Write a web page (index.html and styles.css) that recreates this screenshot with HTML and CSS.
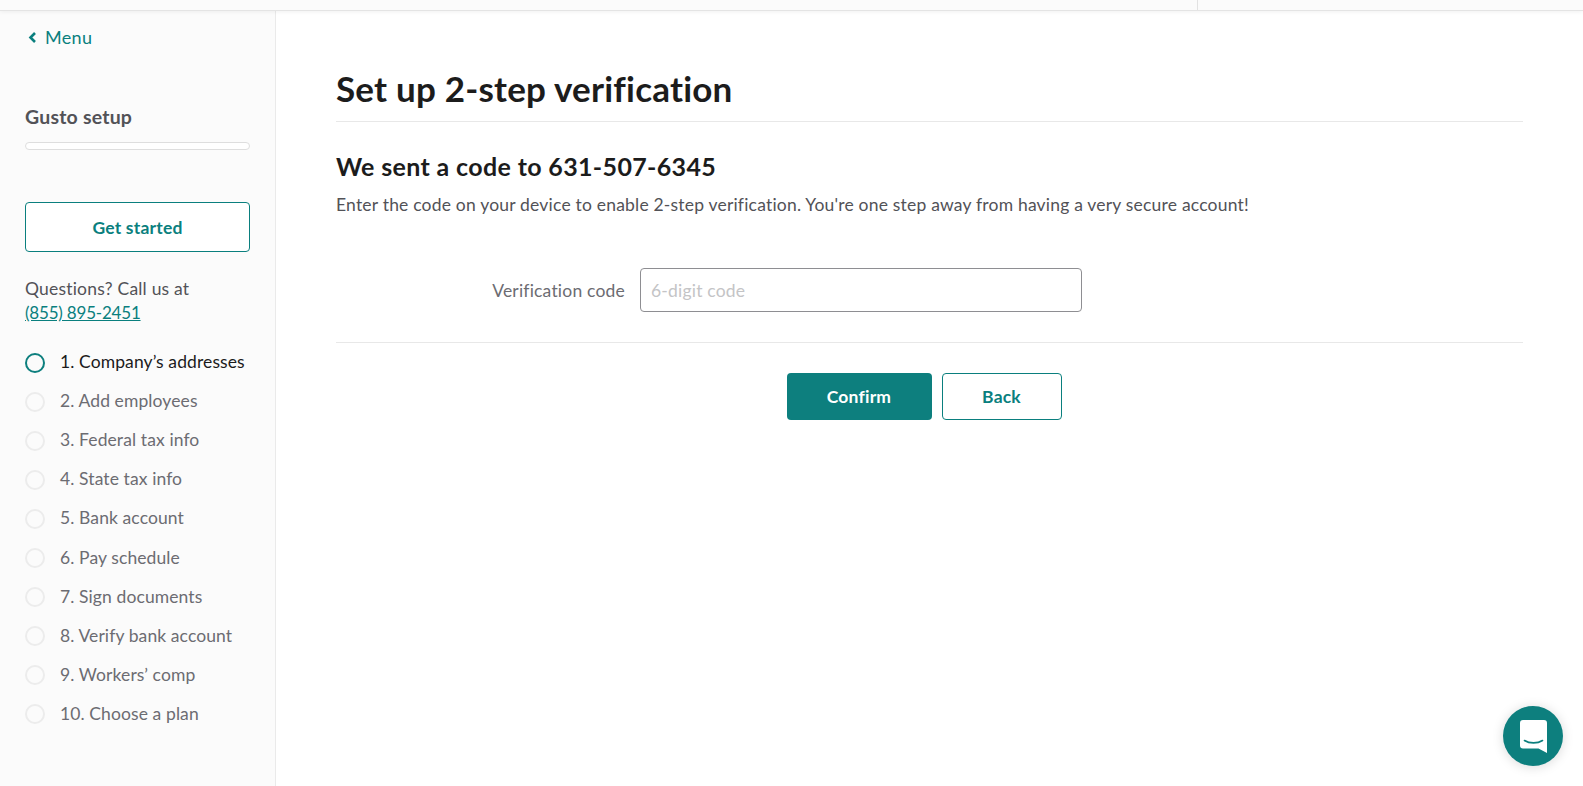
FILE: index.html
```html
<!DOCTYPE html>
<html lang="en">
<head>
    <meta charset="UTF-8">
    <title>Set up 2-step verification</title>
    <link rel="stylesheet" href="styles.css">
</head>
<body>
    <div class="topbar">
        <div class="topbar-divider"></div>
    </div>

    <div class="layout">
        <div class="sidebar">
            <a class="menu-link" href="#">
                <svg class="menu-icon" width="9" height="13" viewBox="0 0 9 13"><path d="M7 2 2.500 6.500 7 11" fill="none" stroke="#0a7f7e" stroke-width="2.600"/></svg>
                Menu
            </a>
            <div class="setup-title">Gusto setup</div>
            <div class="progress"></div>
            <button class="btn btn-outline btn-wide">Get started</button>
            <div class="questions">
                Questions? Call us at<br>
                <a href="#">(855) 895-2451</a>
            </div>
            <div class="steps">
                <div class="step active"><span class="dot"></span>1. Company’s addresses</div>
                <div class="step"><span class="dot"></span>2. Add employees</div>
                <div class="step"><span class="dot"></span>3. Federal tax info</div>
                <div class="step"><span class="dot"></span>4. State tax info</div>
                <div class="step"><span class="dot"></span>5. Bank account</div>
                <div class="step"><span class="dot"></span>6. Pay schedule</div>
                <div class="step"><span class="dot"></span>7. Sign documents</div>
                <div class="step"><span class="dot"></span>8. Verify bank account</div>
                <div class="step"><span class="dot"></span>9. Workers’ comp</div>
                <div class="step"><span class="dot"></span>10. Choose a plan</div>
            </div>
        </div>

        <div class="content">
            <h1 class="page-title">Set up 2-step verification</h1>
            <h2 class="subtitle">We sent a code to 631-507-6345</h2>
            <p class="intro">Enter the code on your device to enable 2-step verification. You're one step away from having a very secure account!</p>
            <div class="field">
                <label class="field-label" for="code">Verification code</label>
                <input class="field-input" id="code" type="text" placeholder="6-digit code">
            </div>
            <div class="actions">
                <button class="btn btn-primary">Confirm</button>
                <button class="btn btn-outline btn-back">Back</button>
            </div>
        </div>
    </div>

    <div class="chat-bubble">
        <svg width="27" height="33" viewBox="0 0 27 33">
            <path d="M3 0h21a3 3 0 0 1 3 3v30l-8.500-4.500H3a3 3 0 0 1-3-3V3a3 3 0 0 1 3-3z" fill="#fff"/>
            <path d="M4.500 20.500c5 3.200 13 3.200 18 0" fill="none" stroke="#0d7f7e" stroke-width="1.600" stroke-linecap="round"/>
        </svg>
    </div>
</body>
</html>
```

FILE: styles.css
```css
* {
    box-sizing: border-box;
}

html, body {
    height: 100%;
}

body {
    margin: 0;
    font-family: Lato, "Open Sans", sans-serif;
    font-size: 17.500px;
    letter-spacing: 0.2px;
    color: #525257;
    background-color: #fff;
    overflow: hidden;
}

.topbar {
    height: 11px;
    background-color: #fbfbfb;
    border-bottom: 1px solid #e4e4e4;
    box-shadow: 0 1px 4px rgba(0, 0, 0, 0.06);
    position: relative;
    z-index: 1;
}

.topbar-divider {
    width: 1px;
    height: 10px;
    margin-left: 1197px;
    background-color: #e2e2e2;
}

.layout {
    display: flex;
    height: 775px;
}

.sidebar {
    width: 276px;
    flex-shrink: 0;
    padding: 15px 25px 0;
    background-color: #fbfbfb;
    border-right: 1px solid #eaeaea;
}

.menu-link {
    display: flex;
    align-items: center;
    gap: 8px;
    height: 22px;
    margin-left: 3px;
    color: #0a7f7e;
    text-decoration: none;
    font-size: 18px;
    letter-spacing: 0.3px;
}

.setup-title {
    margin-top: 56px;
    height: 26px;
    line-height: 26px;
    font-size: 19.500px;
    font-weight: 700;
    letter-spacing: 0.2px;
    color: #525257;
}

.progress {
    height: 8px;
    margin-top: 12px;
    background-color: #fff;
    border: 1px solid #dedede;
    border-radius: 4px;
}

.btn {
    font-family: inherit;
    font-size: 17.500px;
    font-weight: 700;
    letter-spacing: 0.2px;
    border-radius: 4px;
    cursor: pointer;
}

.btn-outline {
    background-color: #fff;
    color: #0a7f7e;
    border: 1px solid #0a7f7e;
}

.btn-primary {
    width: 145px;
    height: 47px;
    background-color: #0d7f7e;
    color: #fff;
    border: none;
}

.btn-wide {
    display: block;
    width: 100%;
    height: 50px;
    margin-top: 52px;
}

.btn-back {
    width: 120px;
    height: 47px;
}

.questions {
    margin-top: 25px;
    line-height: 24px;
}

.questions a {
    color: #0a7f7e;
    font-size: 17px;
    letter-spacing: -0.2px;
}

.steps {
    margin-top: 17px;
}

.step {
    display: flex;
    align-items: center;
    height: 39.100px;
    letter-spacing: 0.1px;
    color: #6c6c72;
}

.step.active {
    color: #1c1c1c;
}

.dot {
    width: 20px;
    height: 20px;
    margin-right: 15px;
    margin-top: 2px;
    border: 2px solid #ececec;
    border-radius: 50%;
    flex-shrink: 0;
}

.step.active .dot {
    border-color: #0d7f7e;
}

.content {
    flex: 1;
    padding: 0 60px;
}

.page-title {
    margin: 40px 0 0;
    height: 71px;
    line-height: 75px;
    font-size: 35px;
    font-weight: 700;
    letter-spacing: 0.2px;
    color: #1c1c1c;
    border-bottom: 1px solid #e8e8e8;
}

.subtitle {
    margin: 28px 0 0;
    line-height: 32px;
    font-size: 25px;
    font-weight: 700;
    letter-spacing: 0.35px;
    color: #1c1c1c;
}

.intro {
    margin: 11px 0 0;
    line-height: 24px;
}

.field {
    display: grid;
    grid-template-columns: 289px 442px;
    column-gap: 15px;
    align-items: center;
    margin-top: 51px;
    padding-bottom: 30px;
    border-bottom: 1px solid #e8e8e8;
}

.field-label {
    text-align: right;
    color: #6c6c72;
}

.field-input {
    height: 44px;
    padding: 0 10px;
    font-family: inherit;
    font-size: 17.500px;
    letter-spacing: 0.2px;
    border: 1px solid #8e8e92;
    border-radius: 4px;
}

.field-input::placeholder {
    color: #c4c4c6;
}

.actions {
    display: flex;
    justify-content: center;
    gap: 10px;
    margin-top: 30px;
    padding-right: 11px;
}

.chat-bubble {
    position: absolute;
    right: 20px;
    bottom: 20px;
    width: 60px;
    height: 60px;
    display: flex;
    align-items: center;
    justify-content: center;
    background-color: #0d7f7e;
    border-radius: 50%;
    box-shadow: 0 1px 12px rgba(0, 0, 0, 0.15);
}
```
